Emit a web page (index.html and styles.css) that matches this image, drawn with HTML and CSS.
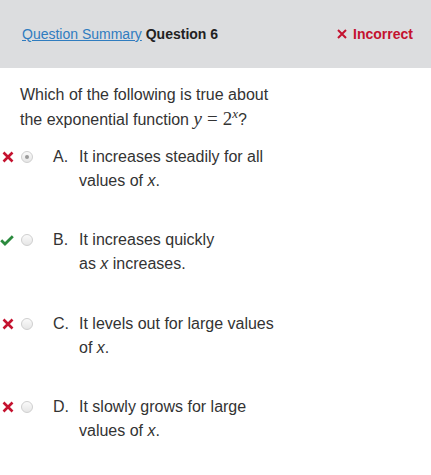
FILE: index.html
```html
<!DOCTYPE html>
<html>
<head>
<meta charset="utf-8">
<link rel="stylesheet" href="styles.css">
</head>
<body>
<div class="header">
  <div class="crumbs"><a class="link" href="#">Question Summary</a> <span class="qnum">Question 6</span></div>
  <div class="status"><svg class="status-x" width="10" height="10" viewBox="0 0 10 10"><path d="M1 1 L9 9 M9 1 L1 9" stroke="#c4122f" stroke-width="2"/></svg>Incorrect</div>
</div>
<div class="content">
  <p class="question">Which of the following is true about<br>the exponential function <span class="math"><i>y</i><span class="eq">=</span>2<sup><i>x</i></sup></span>?</p>
  <div class="options">
    <div class="opt">
      <span class="mark"><svg width="12" height="12" viewBox="0 0 12 12"><path d="M1.5 1.5 L10.5 10.5 M10.5 1.5 L1.5 10.5" stroke="#c4122f" stroke-width="2.6"/></svg></span>
      <span class="radio selected"></span>
      <span class="letter">A.</span>
      <span class="text">It increases steadily for all<br>values of <i>x</i>.</span>
    </div>
    <div class="opt">
      <span class="mark check"><svg width="14" height="11" viewBox="0 0 14 11"><path d="M1.2 5.2 L5 9 L12.8 1.2" fill="none" stroke="#2b8a3e" stroke-width="2.8"/></svg></span>
      <span class="radio"></span>
      <span class="letter">B.</span>
      <span class="text">It increases quickly<br>as <i>x</i> increases.</span>
    </div>
    <div class="opt">
      <span class="mark"><svg width="12" height="12" viewBox="0 0 12 12"><path d="M1.5 1.5 L10.5 10.5 M10.5 1.5 L1.5 10.5" stroke="#c4122f" stroke-width="2.6"/></svg></span>
      <span class="radio"></span>
      <span class="letter">C.</span>
      <span class="text">It levels out for large values<br>of <i>x</i>.</span>
    </div>
    <div class="opt">
      <span class="mark"><svg width="12" height="12" viewBox="0 0 12 12"><path d="M1.5 1.5 L10.5 10.5 M10.5 1.5 L1.5 10.5" stroke="#c4122f" stroke-width="2.6"/></svg></span>
      <span class="radio"></span>
      <span class="letter">D.</span>
      <span class="text">It slowly grows for large<br>values of <i>x</i>.</span>
    </div>
  </div>
</div>
</body>
</html>
```
FILE: styles.css
```css
html, body {
  margin: 0;
  padding: 0;
  background: #ffffff;
  font-family: "Liberation Sans", Arial, sans-serif;
  color: #333333;
}
.header {
  height: 68px;
  background: #dcdddf;
  display: flex;
  align-items: center;
  justify-content: space-between;
  padding: 0 18px 0 22px;
  font-size: 14px;
}
.link {
  color: #2f7cbf;
  text-decoration: underline;
}
.qnum {
  font-weight: bold;
  color: #222222;
}
.status {
  color: #c4122f;
  font-weight: bold;
  display: flex;
  align-items: center;
}
.status-x {
  margin-right: 6px;
}
.content {
  padding: 15px 0 0 0;
}
.question {
  margin: 0 0 13px 20px;
  font-size: 16px;
  line-height: 24px;
}
.math {
  font-family: "Liberation Serif", "Times New Roman", serif;
  font-size: 19px;
}
.math .eq {
  margin: 0 5px;
}
.math sup {
  font-size: 13px;
  line-height: 0;
  vertical-align: 7px;
}
.opt {
  display: flex;
  align-items: flex-start;
  margin-bottom: 35.3px;
  font-size: 16px;
  line-height: 24px;
}
.mark {
  width: 21px;
  height: 24px;
  display: flex;
  align-items: center;
  padding-left: 2px;
  box-sizing: border-box;
}
.mark.check {
  padding-left: 0;
}
.radio {
  width: 12px;
  height: 12px;
  margin-top: 6px;
  border-radius: 50%;
  border: 1px solid #cfcfcf;
  background: linear-gradient(#fafafa, #e6e6e6);
  box-sizing: border-box;
  position: relative;
  flex: none;
}
.radio.selected::after {
  content: "";
  position: absolute;
  left: 3px;
  top: 3px;
  width: 4px;
  height: 4px;
  border-radius: 50%;
  background: #9a9a9a;
}
.letter {
  width: 26px;
  margin-left: 20px;
  flex: none;
}
.text i {
  font-style: italic;
}
```
